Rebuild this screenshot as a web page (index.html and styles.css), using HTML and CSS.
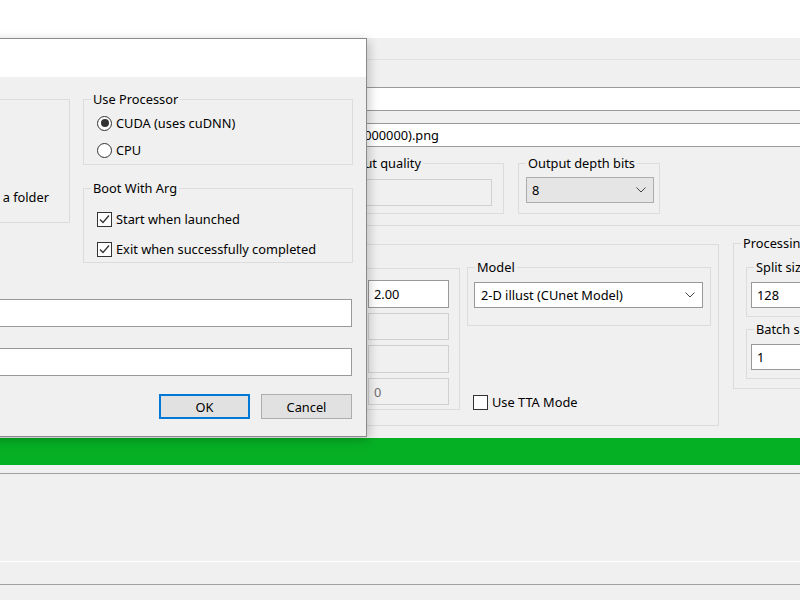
FILE: index.html
```html
<!DOCTYPE html>
<html lang="en">
<head>
    <meta charset="UTF-8">
    <title>waifu2x-caffe</title>
    <link rel="stylesheet" href="styles.css">
</head>
<body>
    <div class="titlestrip"></div>
    <div class="app">
        <div class="menubar"></div>
        <div class="paths">
            <div class="field path-in"></div>
            <div class="field path-out"><div class="path-clip"><span>sample(UpRGB)(x2.000000).png</span></div></div>
        </div>
        <div class="row-out">
            <fieldset class="group quality-group">
                <legend>Output quality</legend>
                <div class="field disabled quality-in"></div>
            </fieldset>
            <fieldset class="group depth-group">
                <legend>Output depth bits</legend>
                <div class="combo list depth-combo">8
                    <svg class="chev" width="10" height="6" viewBox="0 0 10 6"><path d="M0.5 0.5 L5 5 L9.5 0.5" fill="none" stroke="#444" stroke-width="1"/></svg>
                </div>
            </fieldset>
        </div>
        <div class="sep"></div>
        <div class="row-conv">
            <fieldset class="group conv-group">
                <fieldset class="group size-group">
                    <div class="size-row"><div class="field size-in">2.00</div></div>
                    <div class="size-row short"><div class="field disabled size-in"></div></div>
                    <div class="size-row"><div class="field disabled size-in"></div></div>
                    <div class="size-row short"><div class="field disabled size-in">0</div></div>
                </fieldset>
                <div class="model-col">
                    <fieldset class="group model-group">
                        <legend>Model</legend>
                        <div class="combo model-combo">2-D illust (CUnet Model)
                            <svg class="chev" width="10" height="6" viewBox="0 0 10 6"><path d="M0.5 0.5 L5 5 L9.5 0.5" fill="none" stroke="#444" stroke-width="1"/></svg>
                        </div>
                    </fieldset>
                    <label class="opt tta"><span class="check"></span>Use TTA Mode</label>
                </div>
            </fieldset>
            <fieldset class="group proc-group">
                <legend>Processing</legend>
                <fieldset class="group sub-group">
                    <legend>Split size</legend>
                    <div class="field sub-in">128</div>
                </fieldset>
                <fieldset class="group sub-group batch">
                    <legend>Batch size</legend>
                    <div class="field sub-in">1</div>
                </fieldset>
            </fieldset>
        </div>
        <div class="progress"></div>
        <div class="log"></div>
        <div class="log-end"></div>
    </div>

    <div class="dialog">
        <div class="dlg-title"></div>
        <div class="dlg-body">
            <div class="dlg-top">
                <fieldset class="group dlg-left">
                    <div class="note">Output in a folder</div>
                </fieldset>
                <div class="dlg-right">
                    <fieldset class="group proc-pick">
                        <legend>Use Processor</legend>
                        <label class="opt"><span class="radio on"></span>CUDA (uses cuDNN)</label>
                        <label class="opt"><span class="radio"></span>CPU</label>
                    </fieldset>
                    <fieldset class="group boot">
                        <legend>Boot With Arg</legend>
                        <label class="opt"><span class="check on"><svg width="13" height="13" viewBox="0 0 13 13"><path d="M2 6.5 L5 9.5 L11 2.5" fill="none" stroke="#333" stroke-width="1.3"/></svg></span>Start when launched</label>
                        <label class="opt"><span class="check on"><svg width="13" height="13" viewBox="0 0 13 13"><path d="M2 6.5 L5 9.5 L11 2.5" fill="none" stroke="#333" stroke-width="1.3"/></svg></span>Exit when successfully completed</label>
                    </fieldset>
                </div>
            </div>
            <div class="field dlg-field first"></div>
            <div class="field dlg-field"></div>
            <div class="dlg-buttons">
                <button class="btn default">OK</button>
                <button class="btn">Cancel</button>
            </div>
        </div>
    </div>
</body>
</html>
```

FILE: styles.css
```css
body {
    margin: 0;
    width: 800px;
    height: 600px;
    overflow: hidden;
    position: relative;
    background: #fff;
    font-family: "Noto Sans", sans-serif;
    font-size: 12.8px;
    color: #000;
}
.titlestrip {
    height: 38px;
    background: #fff;
}
.app {
    background: #f0f0f0;
    height: 562px;
    overflow: hidden;
}
.menubar {
    height: 21px;
    border-bottom: 1px solid #e3e3e3;
}
.field {
    box-sizing: border-box;
    background: #fff;
    border: 1px solid #999;
    padding: 0 5px;
    display: flex;
    align-items: center;
    white-space: nowrap;
    overflow: hidden;
}
.field.disabled {
    background: #f0f0f0;
    border-color: #d0d0d0;
    color: #6d6d6d;
}
.paths {
    padding-top: 27px;
}
.path-in {
    height: 24px;
    width: 820px;
}
.path-out {
    height: 24px;
    width: 820px;
    margin-top: 12px;
    padding-left: 0;
}
.path-clip {
    width: 438px;
    display: flex;
    justify-content: flex-end;
    overflow: hidden;
}
.path-clip span {
    flex-shrink: 0;
}
.group {
    margin: 0;
    padding: 0 6px;
    border: 1px solid #dcdcdc;
    min-width: 0;
    flex-shrink: 0;
}
.group > legend {
    margin-left: 1px;
    padding: 0 2px;
    line-height: 14px;
    white-space: nowrap;
}
.row-out {
    display: flex;
    gap: 14px;
    margin-top: 9px;
    padding-left: 325px;
}
.quality-group {
    width: 179px;
    box-sizing: border-box;
    padding: 9px 11px 7px 5px;
}
.quality-in {
    height: 27px;
}
.depth-group {
    width: 142px;
    box-sizing: border-box;
    padding: 7px 5px 10px 7px;
}
.depth-group > legend {
    margin-left: 0;
}
.combo {
    box-sizing: border-box;
    height: 26px;
    background: #fff;
    border: 1px solid #999;
    display: flex;
    align-items: center;
    justify-content: space-between;
    padding: 0 7px 0 6px;
    white-space: nowrap;
}
.combo.list {
    background: #e5e5e5;
    border-color: #adadad;
    padding-left: 5px;
}
.sep {
    margin-top: 11px;
    height: 1px;
    background: #dcdcdc;
}
.row-conv {
    display: flex;
    align-items: flex-start;
    gap: 14px;
    margin-top: 10px;
    padding-left: 200px;
}
.conv-group {
    box-sizing: border-box;
    width: 519px;
    margin-top: 8px;
    display: flex;
    align-items: flex-start;
    gap: 7px;
    padding: 15px 7px 10px 6px;
}
.size-group {
    box-sizing: border-box;
    width: 253px;
    margin-top: 8px;
    padding: 11px 10px 4px 6px;
}
.size-row {
    display: flex;
    justify-content: flex-end;
    height: 28px;
}
.size-row.short {
    height: 27px;
}
.size-row + .size-row {
    margin-top: 5px;
}
.size-in {
    width: 81px;
    height: 100%;
}
.model-col {
    width: 244px;
    flex-shrink: 0;
}
.model-group {
    box-sizing: border-box;
    padding: 8px 6px 17px 6px;
}
.model-combo {
    width: 229px;
}
.opt {
    display: flex;
    align-items: center;
    gap: 4px;
    height: 22px;
    white-space: nowrap;
}
.tta {
    margin-top: 65px;
    margin-bottom: 2px;
    padding-left: 6px;
}
.radio {
    box-sizing: border-box;
    width: 15px;
    height: 15px;
    border: 1px solid #333;
    border-radius: 50%;
    background: #fff;
    display: flex;
    align-items: center;
    justify-content: center;
}
.radio.on::after {
    content: "";
    width: 8px;
    height: 8px;
    border-radius: 50%;
    background: #333;
}
.check {
    box-sizing: border-box;
    width: 15px;
    height: 15px;
    border: 1px solid #333;
    background: #fff;
    display: flex;
}
.proc-group {
    box-sizing: border-box;
    width: 120px;
    padding: 10px 0 9px 12px;
}
.proc-group > legend {
    margin-left: -5px;
}
.sub-group {
    padding: 8px 0 8px 4px;
}
.sub-group > legend {
    margin-left: 3px;
}
.sub-group.batch {
    margin-top: 5px;
}
.sub-in {
    height: 26px;
}
.progress {
    margin-top: 12px;
    height: 27px;
    background: #06b025;
}
.log {
    margin-top: 8px;
    height: 87px;
    border-top: 1px solid #a0a0a0;
    border-bottom: 1px solid #fff;
}
.log-end {
    margin-top: 22px;
    height: 1px;
    background: #a0a0a0;
}

/* settings dialog */
.dialog {
    position: absolute;
    left: -160px;
    top: 38px;
    width: 527px;
    height: 399px;
    box-sizing: border-box;
    border: 1px solid #8a8a8a;
    background: #f0f0f0;
    box-shadow: 2px 3px 10px rgba(0, 0, 0, 0.22);
    display: flex;
    flex-direction: column;
}
.dlg-title {
    height: 38px;
    background: #fff;
}
.dlg-body {
    padding: 15px 14px 15px 12px;
}
.dlg-top {
    display: flex;
    gap: 13px;
    align-items: flex-start;
}
.dlg-left {
    box-sizing: border-box;
    width: 217px;
    height: 124px;
    margin-top: 7px;
    padding: 0 20px 0 6px;
}
.note {
    margin-top: 88px;
    text-align: right;
}
.dlg-right {
    width: 270px;
    flex-shrink: 0;
}
.proc-pick {
    padding: 6px 6px 3px 6px;
}
.boot {
    margin-top: 16px;
    padding: 13px 6px 2px 6px;
}
.dlg-right .opt {
    margin-left: 7px;
}
.proc-pick .opt + .opt {
    margin-top: 5px;
}
.boot .opt + .opt {
    margin-top: 8px;
}
.dlg-field {
    height: 28px;
    margin-top: 21px;
}
.dlg-field.first {
    margin-top: 36px;
}
.dlg-buttons {
    margin-top: 18px;
    display: flex;
    justify-content: flex-end;
    gap: 11px;
}
.btn {
    box-sizing: border-box;
    width: 91px;
    height: 25px;
    background: #e1e1e1;
    border: 1px solid #adadad;
    font-family: "Noto Sans", sans-serif;
    font-size: 12.8px;
    color: #000;
    padding: 0;
}
.btn.default {
    border: 2px solid #0078d7;
}
```
